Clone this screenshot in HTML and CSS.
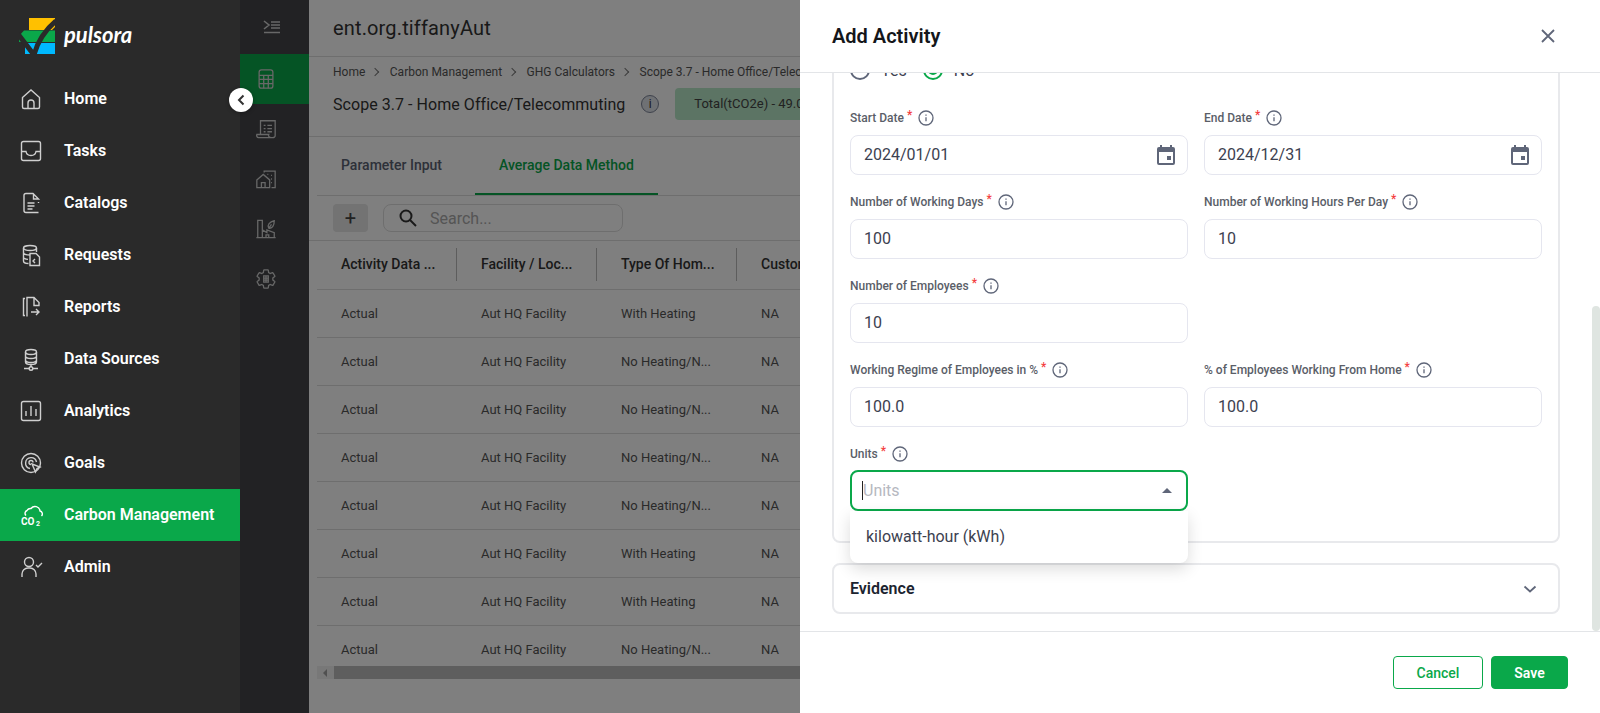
FILE: index.html
```html
<!doctype html>
<html lang="en">
  <head>
    <meta charset="UTF-8" />
    <title>Add Activity</title>
    <link rel="stylesheet" href="styles.css">
  </head>
  <body>
    <div class="app">
      <aside class="sidebar">
        <div class="logo">
          <svg width="37" height="36" viewBox="0 0 37 36">
            <path d="M10 0H36V5L29 12H10Z" fill="#ffc000"/>
            <path d="M36 5V9L33 12H30Z" fill="#ffc000"/>
            <path d="M5 12.500H36V24H0V18Z" fill="#0aa84a"/>
            <path d="M6 25H36V36H6Z" fill="#00b9ff"/>
            <path d="M-1 16 15 37M15 37C18 26 25 13 37 3" fill="none" stroke="#2a2a2a" stroke-width="5"/>
          </svg>
          <span class="logo-name">pulsora</span>
        </div>
        <nav class="nav">
          <a class="nav-item">
            <svg class="nav-icon" viewBox="0 0 24 24"><path d="M3.500 10.500 12 3l8.500 7.500V20a1.500 1.500 0 0 1-1.500 1.500H5A1.500 1.500 0 0 1 3.500 20z"/><path d="M9 21.500V16a3 3 0 0 1 6 0v5.500"/></svg>
            Home
          </a>
          <a class="nav-item">
            <svg class="nav-icon" viewBox="0 0 24 24"><rect x="2.500" y="2.500" width="19" height="19" rx="2"/><path d="M2.500 12.500h4.500c.5 3 2 4 5 4s4.500-1 5-4h4.500"/></svg>
            Tasks
          </a>
          <a class="nav-item">
            <svg class="nav-icon" viewBox="0 0 24 24"><path d="M19.500 21.500H7a2 2 0 0 1-2-2v-15a2 2 0 0 1 2-2h7l5.500 5.500h-5V3M19.500 11v1"/><path d="M8.500 12h7M8.500 15h7M8.500 18h5"/></svg>
            Catalogs
          </a>
          <a class="nav-item">
            <svg class="nav-icon" viewBox="0 0 24 24"><ellipse cx="11" cy="5" rx="6.500" ry="2.500"/><path d="M4.500 5v13c0 1.500 2 2.500 5 2.500M17.500 5v4M4.500 9.500c0 1.500 3 2.500 6.500 2.500M4.500 14c0 1.200 2 2.200 4.500 2.400"/><path d="M11 10.500h6l3.500 3.500v8.500H11z"/><path d="M16 16l-2 2 2 2"/></svg>
            Requests
          </a>
          <a class="nav-item">
            <svg class="nav-icon" viewBox="0 0 24 24"><path d="M6 3.500H4.500v17H6M8 21.500V2.500h7l5 5v3h-5V3"/><path d="M12 17h8M17 14l3 3-3 3"/></svg>
            Reports
          </a>
          <a class="nav-item">
            <svg class="nav-icon" viewBox="0 0 24 24"><ellipse cx="12" cy="5" rx="5.500" ry="2.500"/><path d="M6.500 5v10c0 1.500 2.500 2.500 5.500 2.500s5.500-1 5.500-2.500V5M6.500 9c0 1.500 2.500 2.500 5.500 2.500S17.500 10.500 17.500 9M6.500 13c0 1.500 2.500 2.500 5.500 2.500s5.500-1 5.500-2.500"/><path d="M12 17.500V20M5 21.500h5M14 21.500h5"/><circle cx="12" cy="21.500" r="1.800"/></svg>
            Data Sources
          </a>
          <a class="nav-item">
            <svg class="nav-icon" viewBox="0 0 24 24"><rect x="2.500" y="2.500" width="19" height="19" rx="2"/><path d="M7 17v-5M12 17V7M17 17v-7"/></svg>
            Analytics
          </a>
          <a class="nav-item">
            <svg class="nav-icon" viewBox="0 0 24 24"><circle cx="12" cy="12" r="9.500"/><path d="M11 17.500a5.500 5.500 0 1 1 6.500-6.500"/><path d="M12 13.500a2 2 0 1 1 2-2"/><path d="M13 13l8 3-3 1.500L16.500 21z"/></svg>
            Goals
          </a>
          <a class="nav-item nav-item-active">
            <svg class="nav-icon nav-icon-active" viewBox="0 0 24 24"><path d="M7 12.500a3 3 0 0 1 1-5 4 4 0 0 1 4-2 5 5 0 0 1 9 2.500 3 3 0 0 1 1.500 5"/><text x="2" y="22" class="co2">CO</text><text x="17" y="23" class="co2-sub">2</text></svg>
            Carbon Management
          </a>
          <a class="nav-item">
            <svg class="nav-icon" viewBox="0 0 24 24"><circle cx="10" cy="7" r="4.500"/><path d="M3 22v-3a6 6 0 0 1 6-6h2a6 6 0 0 1 6 6v3"/><path d="M17 10l2 2 4-4"/></svg>
            Admin
          </a>
        </nav>
      </aside>

      <div class="rail">
        <div class="rail-toggle">
          <svg width="18" height="14" viewBox="0 0 18 14"><path d="M1 1l5 4-5 4M8 2h9M8 5h9M8 8h9M1 12.500h16"/></svg>
        </div>
        <div class="rail-item rail-item-active">
          <svg class="rail-icon" viewBox="0 0 24 24"><rect x="4.500" y="2" width="15" height="20" rx="2.500"/><path d="M4.500 8h15M4.500 12.500h15M4.500 17h15M9.500 8v14M14.500 8v14"/></svg>
        </div>
        <div class="rail-item">
          <svg class="rail-icon" viewBox="0 0 24 24"><path d="M6 18V3h16v16a2.500 2.500 0 0 1-2.500 2.500H4A2.500 2.500 0 0 1 2 18h13a2 2 0 0 0 2 3"/><path d="M9.500 8h2M13.500 8h5M9.500 11.500h2M13.500 11.500h5M9.500 15h2M13.500 15h5"/></svg>
        </div>
        <div class="rail-item">
          <svg class="rail-icon" viewBox="0 0 24 24"><path d="M2 13l7-6 7 6v8.500H2z"/><path d="M7 21.500V16h4v5.500M10 5V3.500h12v18h-4M17.500 8h1M17.500 12h1M17.500 16h1M13.500 7h1"/></svg>
        </div>
        <div class="rail-item">
          <svg class="rail-icon" viewBox="0 0 24 24"><path d="M3 2.500h5v19H3zM1.500 21.500h21M8 13l5 3v-3l8 3v5.500M12 21.500v-3h3v3"/><path d="M15 11c-2-3 1-7 6-8 0 5-2 9-6 8zM15 11l3-4"/></svg>
        </div>
        <div class="rail-item">
          <svg class="rail-icon" viewBox="0 0 24 24"><path d="M19.430 12.980c.04-.32.07-.64.07-.98 0-.34-.03-.66-.07-.98l2.110-1.650c.19-.15.24-.42.12-.64l-2-3.460c-.12-.22-.39-.3-.61-.22l-2.490 1c-.52-.4-1.080-.73-1.690-.98l-.38-2.650C14.460 2.180 14.250 2 14 2h-4c-.25 0-.46.18-.49.42l-.38 2.650c-.61.25-1.170.59-1.690.98l-2.490-1c-.23-.09-.49 0-.61.22l-2 3.460c-.13.22-.07.49.12.64l2.110 1.650c-.04.32-.07.65-.07.98 0 .33.03.66.07.98l-2.110 1.650c-.19.15-.24.42-.12.64l2 3.460c.12.22.39.3.61.22l2.490-1c.52.4 1.080.73 1.690.98l.38 2.650c.03.24.24.42.49.42h4c.25 0 .46-.18.49-.42l.38-2.650c.61-.25 1.170-.59 1.690-.98l2.490 1c.23.09.49 0 .61-.22l2-3.460c.12-.22.07-.49-.12-.64z"/><path d="M9.500 8.500h5v7h-5zM9.500 11h5M9.500 13.300h5M12 8.500v7"/></svg>
        </div>
      </div>

      <main class="main">
        <header class="top-bar">ent.org.tiffanyAut</header>
        <section class="crumbs">
          <div class="breadcrumb">
            <span>Home</span><i class="crumb-sep"></i>
            <span>Carbon Management</span><i class="crumb-sep"></i>
            <span>GHG Calculators</span><i class="crumb-sep"></i>
            <span>Scope 3.7 - Home Office/Telecommuting</span>
          </div>
          <div class="page-title">
            <h1>Scope 3.7 - Home Office/Telecommuting</h1>
            <span class="info-badge">i</span>
            <span class="total-pill">Total(tCO2e) - 49.02</span>
          </div>
        </section>
        <div class="tabs">
          <div class="tab">Parameter Input</div>
          <div class="tab tab-active">Average Data Method</div>
        </div>
        <div class="toolbar">
          <button class="add-btn">+</button>
          <div class="search">
            <svg width="20" height="20" viewBox="0 0 20 20"><circle cx="8" cy="8" r="5.500"/><path d="M12 12l6 6"/></svg>
            <span>Search...</span>
          </div>
        </div>
        <div class="table-head">
          <div class="th">Activity Data ...</div>
          <div class="th">Facility / Loc...</div>
          <div class="th">Type Of Hom...</div>
          <div class="th">Custom...</div>
        </div>
        <div class="table-body">
          <div class="tr"><div class="td">Actual</div><div class="td">Aut HQ Facility</div><div class="td">With Heating</div><div class="td">NA</div></div>
          <div class="tr"><div class="td">Actual</div><div class="td">Aut HQ Facility</div><div class="td">No Heating/N...</div><div class="td">NA</div></div>
          <div class="tr"><div class="td">Actual</div><div class="td">Aut HQ Facility</div><div class="td">No Heating/N...</div><div class="td">NA</div></div>
          <div class="tr"><div class="td">Actual</div><div class="td">Aut HQ Facility</div><div class="td">No Heating/N...</div><div class="td">NA</div></div>
          <div class="tr"><div class="td">Actual</div><div class="td">Aut HQ Facility</div><div class="td">No Heating/N...</div><div class="td">NA</div></div>
          <div class="tr"><div class="td">Actual</div><div class="td">Aut HQ Facility</div><div class="td">With Heating</div><div class="td">NA</div></div>
          <div class="tr"><div class="td">Actual</div><div class="td">Aut HQ Facility</div><div class="td">With Heating</div><div class="td">NA</div></div>
          <div class="tr"><div class="td">Actual</div><div class="td">Aut HQ Facility</div><div class="td">No Heating/N...</div><div class="td">NA</div></div>
        </div>
        <div class="h-scroll">
          <div class="h-scroll-arrow"></div>
          <div class="h-scroll-thumb"></div>
        </div>
      </main>
    </div>

    <div class="overlay"></div>

    <button class="collapse-btn">
      <svg width="10" height="12" viewBox="0 0 10 12"><path d="M7.500 1.500 3 6l4.500 4.500"/></svg>
    </button>

    <div class="drawer">
      <div class="drawer-header">
        <h2>Add Activity</h2>
        <svg class="close-icon" width="16" height="16" viewBox="0 0 16 16"><path d="M2 2l12 12M14 2 2 14"/></svg>
      </div>

      <div class="drawer-body">
        <div class="card">
          <div class="radio-row">
            <span class="radio"></span><span class="radio-label">Yes</span>
            <span class="radio radio-on"></span><span class="radio-label">No</span>
          </div>
          <div class="form-grid">
            <div class="field">
              <label class="field-label">Start Date <sup>*</sup>
                <svg class="info" viewBox="0 0 16 16"><circle cx="8" cy="8" r="7"/><path d="M8 7.300v4M8 4.600v1.200"/></svg></label>
              <div class="input"><span>2024/01/01</span>
                <svg class="cal" width="24" height="24" viewBox="0 0 24 24"><path d="M19 4h-1V2h-2v2H8V2H6v2H5a2 2 0 0 0-2 2v14a2 2 0 0 0 2 2h14a2 2 0 0 0 2-2V6a2 2 0 0 0-2-2zm0 16H5V9h14zM13 13h4v4h-4z"/></svg></div>
            </div>
            <div class="field">
              <label class="field-label">End Date <sup>*</sup>
                <svg class="info" viewBox="0 0 16 16"><circle cx="8" cy="8" r="7"/><path d="M8 7.300v4M8 4.600v1.200"/></svg></label>
              <div class="input"><span>2024/12/31</span>
                <svg class="cal" width="24" height="24" viewBox="0 0 24 24"><path d="M19 4h-1V2h-2v2H8V2H6v2H5a2 2 0 0 0-2 2v14a2 2 0 0 0 2 2h14a2 2 0 0 0 2-2V6a2 2 0 0 0-2-2zm0 16H5V9h14zM13 13h4v4h-4z"/></svg></div>
            </div>
            <div class="field">
              <label class="field-label">Number of Working Days <sup>*</sup>
                <svg class="info" viewBox="0 0 16 16"><circle cx="8" cy="8" r="7"/><path d="M8 7.300v4M8 4.600v1.200"/></svg></label>
              <div class="input">100</div>
            </div>
            <div class="field">
              <label class="field-label">Number of Working Hours Per Day <sup>*</sup>
                <svg class="info" viewBox="0 0 16 16"><circle cx="8" cy="8" r="7"/><path d="M8 7.300v4M8 4.600v1.200"/></svg></label>
              <div class="input">10</div>
            </div>
            <div class="field">
              <label class="field-label">Number of Employees <sup>*</sup>
                <svg class="info" viewBox="0 0 16 16"><circle cx="8" cy="8" r="7"/><path d="M8 7.300v4M8 4.600v1.200"/></svg></label>
              <div class="input">10</div>
            </div>
            <div class="field"></div>
            <div class="field">
              <label class="field-label">Working Regime of Employees in % <sup>*</sup>
                <svg class="info" viewBox="0 0 16 16"><circle cx="8" cy="8" r="7"/><path d="M8 7.300v4M8 4.600v1.200"/></svg></label>
              <div class="input">100.0</div>
            </div>
            <div class="field">
              <label class="field-label">% of Employees Working From Home <sup>*</sup>
                <svg class="info" viewBox="0 0 16 16"><circle cx="8" cy="8" r="7"/><path d="M8 7.300v4M8 4.600v1.200"/></svg></label>
              <div class="input">100.0</div>
            </div>
            <div class="field">
              <label class="field-label">Units <sup>*</sup>
                <svg class="info" viewBox="0 0 16 16"><circle cx="8" cy="8" r="7"/><path d="M8 7.300v4M8 4.600v1.200"/></svg></label>
              <div class="input input-focus">
                <span class="caret"></span><span class="placeholder">Units</span>
                <i class="select-arrow"></i>
              </div>
              <div class="dropdown">kilowatt-hour (kWh)</div>
            </div>
          </div>
        </div>

        <div class="evidence">
          <span>Evidence</span>
          <svg width="14" height="8" viewBox="0 0 14 8"><path d="M1.500 1.500 7 6.500l5.500-5"/></svg>
        </div>

        <div class="v-scroll"></div>
      </div>

      <div class="drawer-footer">
        <button class="btn btn-outline">Cancel</button>
        <button class="btn btn-solid">Save</button>
      </div>
    </div>
  </body>
</html>
```

FILE: styles.css
```css
* {
  box-sizing: border-box;
}

html,
body {
  height: 100%;
}

body {
  margin: 0;
  overflow: hidden;
  font-family: Roboto, "Liberation Sans", sans-serif;
  background: #fff;
}

.app {
  display: flex;
  height: 713px;
}

/* left nav */
.sidebar {
  width: 240px;
  flex-shrink: 0;
  background: #2a2a2a;
  position: relative;
  z-index: 2;
}

.logo {
  height: 73px;
  display: flex;
  align-items: center;
  padding: 0 0 1px 19px;
  gap: 8px;
}

.logo-name {
  margin-top: -3px;
  font-family: Lato, sans-serif;
  font-style: italic;
  font-weight: 700;
  font-size: 22px;
  color: #fff;
}

.nav-item {
  height: 52px;
  display: flex;
  align-items: center;
  gap: 21px;
  padding: 0 0 2px 19px;
  color: #fff;
  font-size: 16px;
  font-weight: 600;
}

.nav-item-active {
  background: #0aa84a;
}

.nav-icon {
  width: 24px;
  height: 24px;
  margin-top: 2px;
  fill: none;
  stroke: #cfcfcf;
  stroke-width: 1.4;
}

.nav-icon-active {
  stroke: #fff;
}

.co2 {
  font-size: 10px;
  font-weight: 700;
  fill: #fff;
  stroke: none;
}

.co2-sub {
  font-size: 7px;
  font-weight: 700;
  fill: #fff;
  stroke: none;
}

/* second rail */
.rail {
  width: 69px;
  flex-shrink: 0;
  background: #444549;
}

.rail-toggle {
  height: 54px;
  display: flex;
  align-items: center;
  padding-left: 23px;
}

.rail-toggle svg {
  fill: none;
  stroke: #d0d0d0;
  stroke-width: 1.600;
}

.rail-item {
  height: 50px;
  display: flex;
  align-items: center;
  padding-left: 15px;
}

.rail-item-active {
  background: #0aa84a;
}

.rail-icon {
  width: 22px;
  height: 22px;
  fill: none;
  stroke: #d0d0d0;
  stroke-width: 1.400;
}

/* page behind the drawer */
.main {
  flex: 1;
  overflow: hidden;
  background: #fff;
  color: #333;
}

.top-bar {
  height: 57px;
  padding: 0 24px;
  line-height: 56px;
  font-size: 20px;
  letter-spacing: 0.15px;
  border-bottom: 1px solid #ddd;
  white-space: nowrap;
}

.crumbs {
  height: 80px;
  padding: 7px 24px 0;
  border-bottom: 1px solid #ddd;
}

.breadcrumb {
  height: 16px;
  display: flex;
  align-items: center;
  font-size: 12px;
  color: #555;
  white-space: nowrap;
}

.crumb-sep {
  width: 6px;
  height: 6px;
  margin: 0 11.500px 0 7px;
  border-top: 1px solid #777;
  border-right: 1px solid #777;
  transform: rotate(45deg);
}

.page-title {
  display: flex;
  align-items: center;
  margin-top: 8px;
  height: 32px;
  white-space: nowrap;
}

.page-title h1 {
  margin: 0;
  font-size: 16px;
  font-weight: 400;
  letter-spacing: 0.05px;
}

.info-badge {
  width: 18px;
  height: 18px;
  margin-left: 16px;
  border-radius: 50%;
  border: 1px solid #7d8599;
  background: #dfe2e8;
  text-align: center;
  font-size: 12px;
  line-height: 16px;
}

.total-pill {
  margin-left: 16px;
  height: 32px;
  padding: 0 19px;
  border-radius: 4px;
  background: #b8e8c8;
  font-size: 13px;
  line-height: 32px;
  color: #444;
}

.tabs {
  height: 59px;
  margin-left: 8px;
  display: flex;
  border-bottom: 1px solid #ddd;
  font-size: 14px;
  font-weight: 500;
}

.tab {
  height: 58px;
  line-height: 56px;
  padding: 0 33px 0 24px;
  color: #5b6273;
  border-bottom: 2px solid transparent;
}

.tab-active {
  padding: 0 24px;
  color: #0aa84a;
  border-bottom-color: #0aa84a;
}

.toolbar {
  height: 45px;
  padding: 8px 0 0 24px;
  display: flex;
  gap: 15px;
  border-bottom: 1px solid #ddd;
}

.add-btn {
  width: 35px;
  height: 28px;
  padding: 0;
  border: none;
  border-radius: 4px;
  background: #e6e6e6;
  font-family: inherit;
  font-size: 20px;
  line-height: 28px;
  color: #444;
}

.search {
  width: 240px;
  height: 28px;
  display: flex;
  align-items: center;
  gap: 12px;
  padding-left: 14px;
  border: 1px solid #ddd;
  border-radius: 8px;
  font-size: 16px;
  color: #aaa;
}

.search svg {
  fill: none;
  stroke: #333;
  stroke-width: 2;
  flex-shrink: 0;
}

.table-head,
.tr {
  display: flex;
  margin-left: 8px;
  white-space: nowrap;
  border-bottom: 1px solid #ddd;
}

.table-head {
  height: 49px;
  align-items: center;
  padding-bottom: 2px;
  font-size: 14px;
  font-weight: 500;
}

.th {
  width: 140px;
  height: 33px;
  flex-shrink: 0;
  line-height: 33px;
  padding-left: 24px;
  border-right: 1px solid #bbb;
}

.table-body {
  height: 376px;
  overflow: hidden;
}

.tr {
  height: 48px;
  align-items: center;
  font-size: 13px;
  color: #555;
}

.td {
  width: 140px;
  flex-shrink: 0;
  padding-left: 24px;
}

.h-scroll {
  height: 13px;
  margin-left: 8px;
  display: flex;
  background: #f1f1f1;
}

.h-scroll-arrow {
  width: 17px;
  position: relative;
}

.h-scroll-arrow::after {
  content: "";
  position: absolute;
  left: 6px;
  top: 3px;
  border: 4px solid transparent;
  border-left: 0;
  border-right: 4px solid #a0a0a0;
}

.h-scroll-thumb {
  flex: 1;
  background: #bdbdbd;
}

.overlay {
  position: absolute;
  top: 0;
  left: 240px;
  right: 0;
  bottom: 0;
  background: rgba(0, 0, 0, 0.5);
}

.collapse-btn {
  position: absolute;
  left: 229px;
  top: 88px;
  width: 24px;
  height: 24px;
  z-index: 3;
  padding: 0;
  border: none;
  border-radius: 50%;
  background: #fff;
  box-shadow: 0 1px 4px rgba(0, 0, 0, 0.3);
  display: flex;
  align-items: center;
  justify-content: center;
}

.collapse-btn svg {
  fill: none;
  stroke: #333;
  stroke-width: 2;
}

/* drawer */
.drawer {
  position: absolute;
  top: 0;
  right: 0;
  bottom: 0;
  width: 800px;
  z-index: 4;
  background: #fff;
  display: flex;
  flex-direction: column;
  color: #3c4150;
}

.drawer-header {
  height: 73px;
  flex-shrink: 0;
  display: flex;
  align-items: center;
  justify-content: space-between;
  padding: 0 44px 0 32px;
  border-bottom: 1px solid #e3e5e8;
  position: relative;
  z-index: 1;
  background: #fff;
}

.drawer-header h2 {
  margin: 0;
  font-size: 20px;
  font-weight: 600;
  color: #14161a;
}

.close-icon {
  fill: none;
  stroke: #5f6679;
  stroke-width: 1.800;
}

.drawer-body {
  flex: 1;
  position: relative;
  overflow: hidden;
  padding: 0 40px 0 32px;
}

.card {
  margin-top: -40px;
  padding: 25px 16px 30px;
  border: 2px solid #e8e9ec;
  border-radius: 8px;
}

.radio-row {
  height: 20px;
  margin-bottom: 28px;
  display: flex;
  align-items: center;
}

.radio {
  width: 20px;
  height: 20px;
  border: 2px solid #5f6679;
  border-radius: 50%;
  position: relative;
}

.radio-on {
  border-color: #0aa84a;
}

.radio-on::after {
  content: "";
  position: absolute;
  left: 3px;
  top: 3px;
  width: 10px;
  height: 10px;
  border-radius: 50%;
  background: #0aa84a;
}

.radio-label {
  margin: 0 16px 0 11px;
  font-size: 16px;
}

.form-grid {
  display: grid;
  grid-template-columns: 338px 338px;
  column-gap: 16px;
  row-gap: 17px;
}

.field {
  position: relative;
  min-height: 67px;
}

.field-label {
  height: 20px;
  margin-bottom: 7px;
  display: flex;
  align-items: center;
  font-size: 12px;
  font-weight: 500;
  color: #5a5e68;
  white-space: pre;
}

.field-label sup {
  color: #f43f3f;
  font-size: 12px;
  line-height: 1;
  margin-top: -6px;
  vertical-align: baseline;
}

.info {
  width: 16px;
  height: 16px;
  margin-left: 6px;
  fill: none;
  stroke: #5f6679;
  stroke-width: 1.300;
}

.input {
  height: 40px;
  display: flex;
  align-items: center;
  justify-content: space-between;
  padding: 0 9px 2px 13px;
  border: 1px solid #e5e6ef;
  border-radius: 8px;
  font-size: 16px;
}

.cal {
  fill: #5f6679;
  margin-top: 2px;
}

.input-focus {
  height: 41px;
  margin-top: -1px;
  justify-content: flex-start;
  padding: 0 9px 0 10px;
  border: 2px solid #0aa84a;
  position: relative;
}

.caret {
  width: 1px;
  height: 19px;
  background: #222;
}

.placeholder {
  color: #b6b8bf;
}

.select-arrow {
  position: absolute;
  right: 14px;
  top: 16px;
  border: 5px solid transparent;
  border-top: 0;
  border-bottom: 5px solid #5f6679;
}

.dropdown {
  position: absolute;
  left: 0;
  right: 0;
  top: 67px;
  height: 52px;
  padding-left: 16px;
  line-height: 52px;
  font-size: 16px;
  background: #fff;
  border-radius: 0 0 8px 8px;
  box-shadow: 0 6px 16px rgba(0, 0, 0, 0.14);
  z-index: 2;
}

.evidence {
  height: 51px;
  margin-top: 20px;
  padding: 0 21px 0 16px;
  display: flex;
  align-items: center;
  justify-content: space-between;
  border: 2px solid #e8e9ec;
  border-radius: 8px;
  font-size: 16px;
  font-weight: 600;
  color: #1c2430;
}

.evidence svg {
  fill: none;
  stroke: #5f6679;
  stroke-width: 1.800;
}

.v-scroll {
  position: absolute;
  right: 0;
  top: 233px;
  bottom: 0;
  width: 8px;
  background: #dfe5e1;
  border-radius: 4px;
}

.drawer-footer {
  height: 82px;
  flex-shrink: 0;
  display: flex;
  justify-content: flex-end;
  gap: 8px;
  padding: 24px 32px 0 0;
  border-top: 1px solid #e3e5e8;
}

.btn {
  height: 33px;
  padding: 0;
  border-radius: 4px;
  font-family: inherit;
  font-size: 14px;
  font-weight: 600;
}

.btn-outline {
  width: 90px;
  font-weight: 500;
  background: #fff;
  border: 1px solid #0aa84a;
  color: #0aa84a;
}

.btn-solid {
  width: 77px;
  background: #0aa84a;
  border: 1px solid #0aa84a;
  color: #fff;
}
```
